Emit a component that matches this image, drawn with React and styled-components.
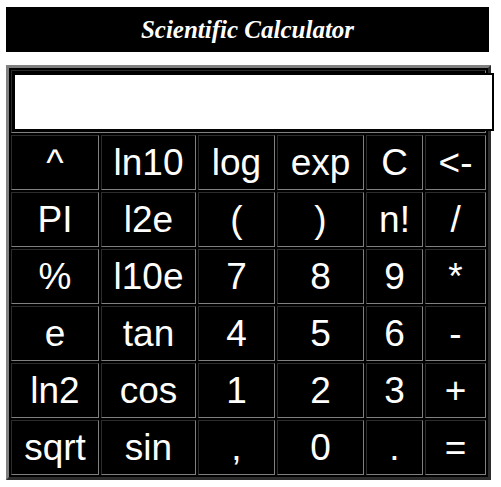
import React from 'react';
import styled, { createGlobalStyle } from 'styled-components';

const GlobalStyle = createGlobalStyle`
  body {
    margin: 0;
    background: #fff;
    font-family: "Liberation Sans", Arial, sans-serif;
  }
`;

const Page = styled.div`
  padding: 7px 0 0 6px;
`;

const Title = styled.h1`
  box-sizing: border-box;
  width: 483px;
  height: 45px;
  margin: 0 0 13px;
  background: #000;
  color: #fff;
  font-family: "Liberation Serif", "Times New Roman", serif;
  font-style: italic;
  font-weight: bold;
  font-size: 25px;
  line-height: 45px;
  text-align: center;
`;

const Table = styled.table`
  width: 485px;
  table-layout: fixed;
  background: #000;
  border: 3px outset #808080;
  border-spacing: 2px;
`;

const Cell = styled.td`
  box-sizing: border-box;
  border: 1px inset #808080;
  padding: 1px;
  height: ${({ $h }) => $h}px;
  color: #fff;
  font-family: "Liberation Sans", Arial, sans-serif;
  font-size: 37px;
  line-height: 1;
  text-align: center;
  vertical-align: middle;
  cursor: pointer;
  user-select: none;
`;

const Display = styled.input`
  display: block;
  box-sizing: border-box;
  width: 481px;
  height: 58px;
  margin: 0;
  border: 2px solid #000;
  background: #fff;
  font-size: 30px;
  outline: none;
`;

const widths = [88, 95, 77, 87, 57, 61];

const rows = [
  ['^', 'ln10', 'log', 'exp', 'C', '<-'],
  ['PI', 'l2e', '(', ')', 'n!', '/'],
  ['%', 'l10e', '7', '8', '9', '*'],
  ['e', 'tan', '4', '5', '6', '-'],
  ['ln2', 'cos', '1', '2', '3', '+'],
  ['sqrt', 'sin', ',', '0', '.', '='],
];

export default function App() {
  return (
    <Page>
      <GlobalStyle />
      <Title>Scientific Calculator</Title>
      <Table>
        <colgroup>
          {widths.map((w, i) => (
            <col key={i} style={{ width: w }} />
          ))}
        </colgroup>
        <tbody>
          <tr>
            <Cell colSpan={6} $h={63}>
              <Display type="text" readOnly />
            </Cell>
          </tr>
          {rows.map((row, r) => (
            <tr key={r}>
              {row.map((k) => (
                <Cell key={k} $h={55}>
                  {k}
                </Cell>
              ))}
            </tr>
          ))}
        </tbody>
      </Table>
    </Page>
  );
}
